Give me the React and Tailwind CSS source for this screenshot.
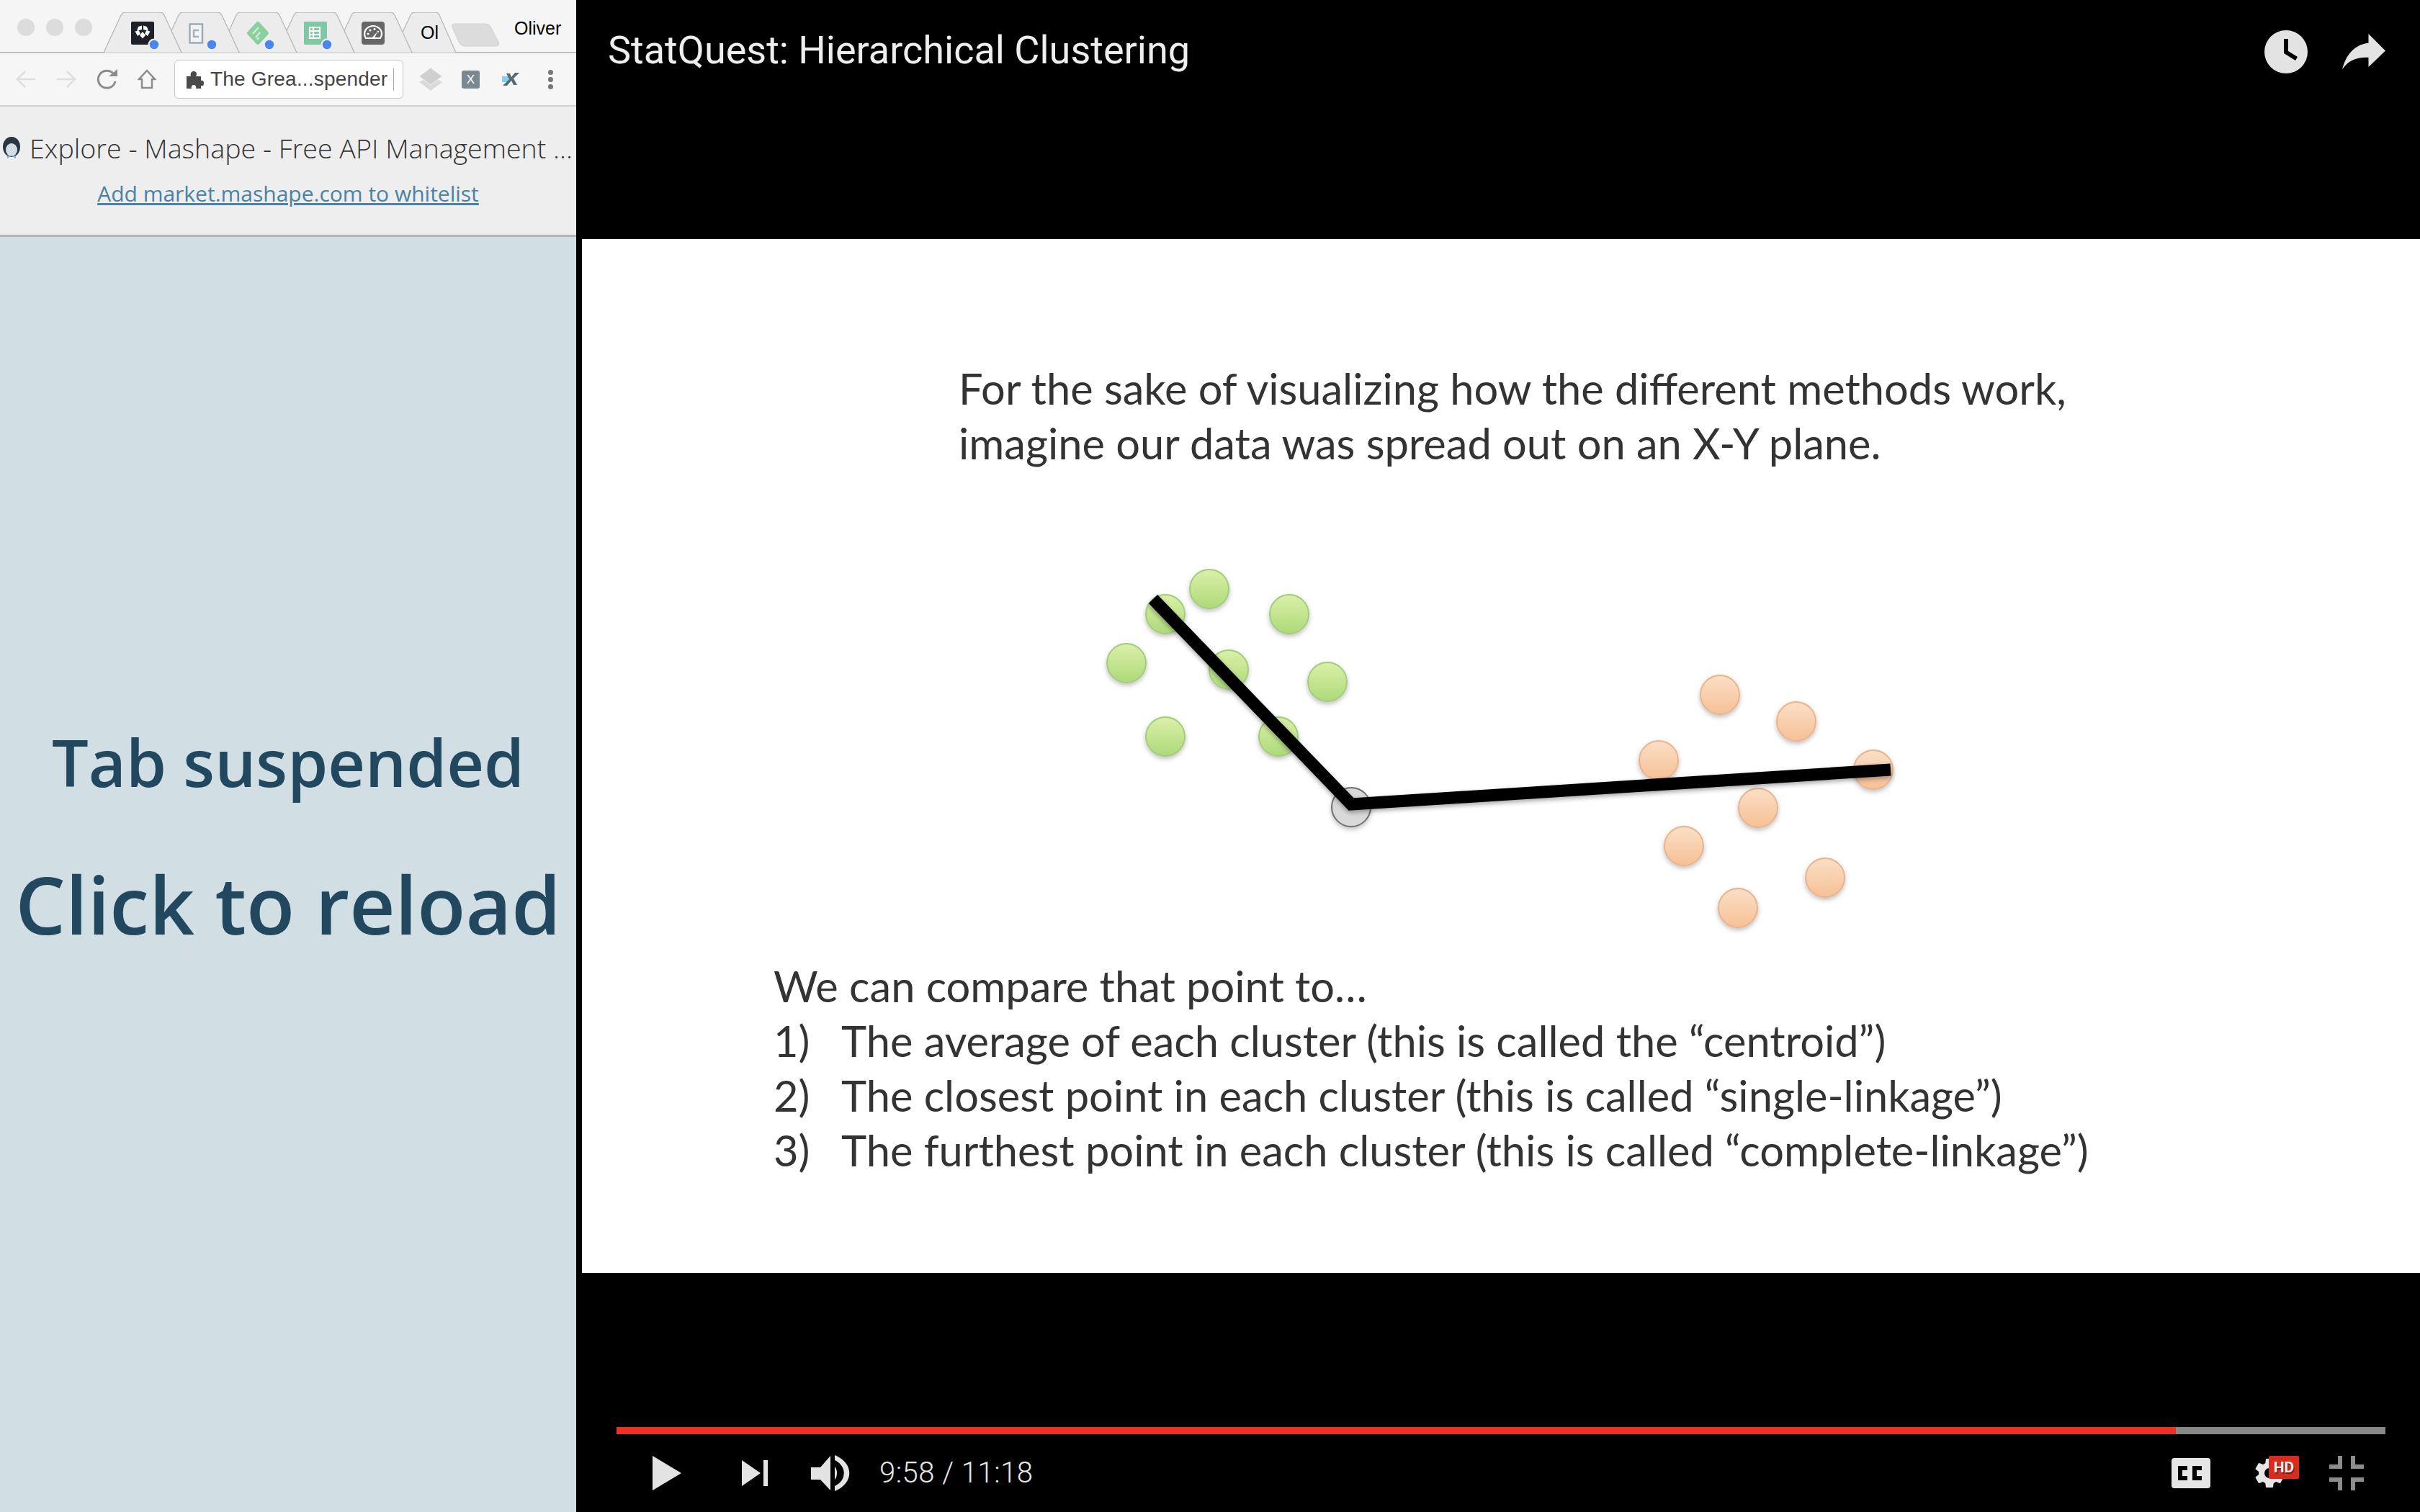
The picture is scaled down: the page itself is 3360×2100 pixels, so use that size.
import React from 'react';

// [bottom-left, top-left, top-right, bottom-right], first tab lies on top
const TAB_EDGES = [
  [4, 30, 86, 112],
  [84, 110, 166, 192],
  [164, 190, 246, 272],
  [244, 270, 326, 352],
  [324, 350, 406, 432],
  [406, 432, 468, 493],
];

const GREEN_DOTS = [[1618, 853], [1679, 818], [1790, 853], [1564, 921], [1706, 930], [1843, 947], [1618, 1023], [1775, 1023]];
const ORANGE_DOTS = [[2388, 965], [2494, 1002], [2303, 1056], [2601, 1069], [2441, 1122], [2338, 1175], [2534, 1219], [2413, 1261]];

const BlueDot = ({ cx }) => (
  <g>
    <circle cx={cx} cy="45" r="8.5" fill="#ececec" />
    <circle cx={cx} cy="45" r="6.2" fill="#4a86ee" />
  </g>
);

// tab strip drawn as one picture, the favicons sit on the tab shapes
function TabStrip() {
  return (
    <svg width="560" height="57" viewBox="0 0 560 57" className="mt-[17px] block shrink-0">
      {[...TAB_EDGES].reverse().map(([bl, tl, tr, br]) => (
        <path
          key={tl}
          d={`M${bl} 56 L${tl - 2} 4 Q${tl} 0 ${tl + 4} 0 L${tr - 4} 0 Q${tr} 0 ${tr + 2} 4 L${br} 56`}
          fill="#ececec"
          stroke="#b8b8b8"
          strokeWidth="1.3"
        />
      ))}
      <path d="M490 16 L534 16 Q539 16 541 20 L552 41 Q554 47 549 47 L505 47 Q500 47 498 43 L488 21 Q487 16 490 16 Z" fill="#dcdcdc" stroke="#d2d2d2" />

      <rect x="42" y="13" width="32" height="32" rx="2" fill="#1f2128" />
      <path d="M52 20 L57 18.5 L57 24 L50 26 Z M64 20 L59 18.5 L59 24 L66 26 Z M47.5 26.5 L53 25.5 L55 30 L51 33 Z M68.5 26.5 L63 25.5 L61 30 L65 33 Z M58 27 L62 32 L58 36.5 L54 32 Z" fill="#fff" />
      <BlueDot cx="74" />

      <rect x="123.5" y="16.5" width="17.5" height="26" fill="#f2f4f5" stroke="#9dabb4" strokeWidth="2.5" />
      <path d="M136 25 H129 V34 H136" fill="none" stroke="#a5b1b9" strokeWidth="2.5" />
      <BlueDot cx="154" />

      <path d="M216 14 Q218 12 220 14 L232 27 Q234 29 232 31 L220 44 Q218 46 216 44 L204 31 Q202 29 204 27 Z" fill="#8acf9e" />
      <path d="M219 21 L211 30 M221 28 L215 35 M219 35 L217 38" stroke="#cfeeda" strokeWidth="2.5" />
      <BlueDot cx="234" />

      <rect x="282" y="13" width="32" height="32" rx="1.5" fill="#7ec8a3" />
      <path d="M290 21 H304 V36 H290 Z M290 26 H304 M290 31 H304 M295 21 V36" stroke="#fff" strokeWidth="2.2" fill="none" />
      <BlueDot cx="314" />

      <rect x="362" y="13" width="32" height="32" rx="4" fill="#666" />
      <path d="M368 36 Q366 33 366 30 A12 11 0 0 1 390 30 Q390 33 388 36 Z" fill="#666" stroke="#fff" strokeWidth="2.2" />
      <path d="M376 36 L384 27 L380 36 Z" fill="#fff" />
      <circle cx="371" cy="30" r="1.6" fill="#fff" />
      <circle cx="374" cy="25" r="1.6" fill="#fff" />
      <circle cx="380" cy="23.5" r="1.6" fill="#fff" />
      <circle cx="385" cy="27" r="1.2" fill="#fff" />

      <clipPath id="ol-clip"><rect x="444" y="10" width="24" height="40" /></clipPath>
      <text x="444" y="37" fontSize="25" fill="#000" clipPath="url(#ol-clip)" fontFamily="'Liberation Sans', sans-serif">Ol</text>
    </svg>
  );
}

function BrowserToolbar() {
  return (
    <div className="flex h-[74px] items-center border-b-2 border-[#d2d2d2] bg-[#f6f6f6] pl-[22px]">
      <svg width="28" height="26" viewBox="0 0 28 26" className="shrink-0">
        <path d="M27 13 H3 M13 2 L2 13 L13 24" fill="none" stroke="#dedede" strokeWidth="2.5" />
      </svg>
      <svg width="28" height="26" viewBox="0 0 28 26" className="ml-[28px] shrink-0">
        <path d="M1 13 H25 M15 2 L26 13 L15 24" fill="none" stroke="#dedede" strokeWidth="2.5" />
      </svg>
      <svg width="30" height="28" viewBox="0 0 30 28" className="ml-[28px] shrink-0">
        <path d="M26 17 A12 12 0 1 1 23 6" fill="none" stroke="#8c8c8c" strokeWidth="3" />
        <path d="M17 10 H29 V0 Z" fill="#8c8c8c" />
      </svg>
      <svg width="26" height="28" viewBox="0 0 26 28" className="ml-[27px] shrink-0">
        <path d="M13 2 L24 14 H20 V26 H6 V14 H2 Z" fill="none" stroke="#8c8c8c" strokeWidth="2.5" />
      </svg>
      <div className="ml-[25px] flex h-[54px] w-[318px] shrink-0 items-center rounded-[6px] border border-[#c4c4c4] bg-white pl-[15px]">
        <svg width="25" height="25" viewBox="0 0 25 25" className="shrink-0">
          <path d="M1 8 H7 C6 5 7 1 11 1 C15 1 16 5 14 8 H21 V14 C24 13 25 15 25 18 C25 21 23 22 21 21 V25 H14 C15 22 13 20 11 20 C9 20 7 22 8 25 H1 Z" fill="#4a4a4a" />
        </svg>
        <span className="ml-[9px] font-['Liberation_Sans',sans-serif] text-[28px] leading-none tracking-[0.2px] whitespace-nowrap text-[#444]">The Grea...spender</span>
        <span className="ml-[8px] h-[31px] w-px bg-[#aaa]" />
      </div>
      <svg width="34" height="32" viewBox="0 0 34 32" className="ml-[21px] shrink-0">
        <path d="M17 11 L33 20 L17 32 L1 20 Z" fill="#dadada" />
        <path d="M17 0 L33 12 L17 24 L1 12 Z" fill="#cfcfcf" stroke="#f6f6f6" strokeWidth="1" />
      </svg>
      <div className="ml-[26px] flex h-[25px] w-[25px] shrink-0 items-center justify-center rounded-[3px] bg-[#7a888f] font-['Liberation_Sans',sans-serif] text-[17px] leading-none text-white">X</div>
      <svg width="25" height="18" viewBox="0 0 25 18" className="ml-[31px] shrink-0">
        <rect x="0" y="5" width="11" height="8" fill="#7fd0f2" />
        <path d="M6 1 H11 L13 6 L18 0 H24 L16 8 L21 17 H16 L13 11 L7 18 H1 L10 9 Z" fill="#5a6a72" />
      </svg>
      <div className="ml-[39px] flex shrink-0 flex-col gap-[3px]">
        <span className="h-[7px] w-[7px] rounded-full bg-[#777]" />
        <span className="h-[7px] w-[7px] rounded-full bg-[#777]" />
        <span className="h-[7px] w-[7px] rounded-full bg-[#777]" />
      </div>
    </div>
  );
}

function SuspendedPanel() {
  return (
    <div className="flex h-full w-[800px] shrink-0 flex-col">
      <div className="flex h-[74px] shrink-0 items-start border-b-2 border-[#c0c0c0] bg-[#f5f5f5]">
        <div className="mt-[26px] ml-[24px] flex shrink-0 gap-[16px]">
          <span className="h-[24px] w-[24px] rounded-full bg-[#dcdcdc]" />
          <span className="h-[24px] w-[24px] rounded-full bg-[#dcdcdc]" />
          <span className="h-[24px] w-[24px] rounded-full bg-[#dcdcdc]" />
        </div>
        <div className="ml-[12px] h-[73px] w-[560px] shrink-0 overflow-hidden"><TabStrip /></div>
        <span className="mt-[27px] ml-[14px] font-['Liberation_Sans',sans-serif] text-[25px] leading-none text-black">Oliver</span>
      </div>
      <BrowserToolbar />
      <div className="flex h-[181px] shrink-0 flex-col border-b-[3px] border-[#b4b4b4] bg-[#eeeeee]">
        <div className="mt-[30px] flex items-center pl-[3px] whitespace-nowrap">
          <svg width="26" height="32" viewBox="0 0 26 32" className="shrink-0">
            <ellipse cx="13" cy="14" rx="12" ry="14" fill="#263645" />
            <ellipse cx="13" cy="18" rx="8" ry="9" fill="#d5dce2" />
            <path d="M7 30 L13 27 L19 30 L19 26 L7 26 Z" fill="#7fb2cc" />
          </svg>
          <span className="ml-[12px] font-['Open_Sans',sans-serif] text-[37.6px] leading-[56px] font-light text-[#333]">Explore - Mashape - Free API Management ...</span>
        </div>
        <a className="mt-[13px] text-center font-['Open_Sans',sans-serif] text-[30px] leading-[44px] text-[#4a82a6] underline">Add market.mashape.com to whitelist</a>
      </div>
      <div className="flex flex-1 flex-col items-center bg-[#d1dfe5] font-['Open_Sans',sans-serif] font-semibold whitespace-nowrap text-[#22485f]">
        <h1 className="mt-[667px] text-[90px] leading-[124px]">Tab suspended</h1>
        <h2 className="mt-[60px] text-[110px] leading-[150px]">Click to reload</h2>
      </div>
    </div>
  );
}

function ClusterPlot() {
  return (
    <svg width="2552" height="510" viewBox="808 790 2552 510" className="block shrink-0">
      <defs>
        <linearGradient id="green-dot" x1="0" y1="0" x2="0" y2="1">
          <stop offset="0" stopColor="#daf0a8" />
          <stop offset="1" stopColor="#aed97a" />
        </linearGradient>
        <linearGradient id="orange-dot" x1="0" y1="0" x2="0" y2="1">
          <stop offset="0" stopColor="#fbdfc6" />
          <stop offset="1" stopColor="#f6c097" />
        </linearGradient>
        <filter id="dot-shadow" x="-30%" y="-30%" width="160%" height="170%">
          <feDropShadow dx="0" dy="3" stdDeviation="3" floodColor="#000" floodOpacity="0.25" />
        </filter>
        <filter id="line-blur" x="-5%" y="-20%" width="110%" height="140%">
          <feDropShadow dx="0" dy="3" stdDeviation="3" floodColor="#000" floodOpacity="0.35" />
        </filter>
      </defs>
      {GREEN_DOTS.map(([cx, cy]) => (
        <circle key={cx + '-' + cy} cx={cx} cy={cy} r="27" fill="url(#green-dot)" stroke="#a3cc7c" strokeWidth="2" filter="url(#dot-shadow)" />
      ))}
      {ORANGE_DOTS.map(([cx, cy]) => (
        <circle key={cx + '-' + cy} cx={cx} cy={cy} r="27" fill="url(#orange-dot)" stroke="#e9b48a" strokeWidth="2" filter="url(#dot-shadow)" />
      ))}
      <circle cx="1876" cy="1121" r="27" fill="#d9d9d9" stroke="#707070" strokeWidth="2" filter="url(#dot-shadow)" />
      <path d="M1601 832 L1876 1117 L2625 1069" fill="none" stroke="#000" strokeWidth="17" filter="url(#line-blur)" />
    </svg>
  );
}

function Slide() {
  return (
    <div className="ml-2 flex h-[1436px] flex-col bg-white font-['Lato',sans-serif] text-[59.6px] leading-[76px] whitespace-nowrap text-[#333]">
      <div className="mt-[169px] pl-[523px]">
        <p>For the sake of visualizing how the different methods work,</p>
        <p>imagine our data was spread out on an X-Y plane.</p>
      </div>
      <div className="mt-[137px]"><ClusterPlot /></div>
      <div className="mt-[31px] pl-[266px]">
        <p>We can compare that point to…</p>
        <div className="flex"><span className="w-[94px]">1)</span><span>The average of each cluster (this is called the “centroid”)</span></div>
        <div className="flex"><span className="w-[94px]">2)</span><span>The closest point in each cluster (this is called “single-linkage”)</span></div>
        <div className="flex"><span className="w-[94px]">3)</span><span>The furthest point in each cluster (this is called “complete-linkage”)</span></div>
      </div>
    </div>
  );
}

function Controls() {
  return (
    <div className="flex flex-1 flex-col justify-end pb-[28px]">
      <div className="mr-[48px] ml-[56px] flex h-[10px] bg-[#888]">
        <div className="h-full w-[2165px] bg-[#ee3124]" />
      </div>
      <div className="mt-[28px] flex h-[52px] items-center pr-[78px] pl-[106px]">
        <svg width="40" height="48" viewBox="0 0 40 48" className="shrink-0"><path d="M0 0 L40 24 L0 48 Z" fill="#e3e3e3" /></svg>
        <svg width="36" height="36" viewBox="0 0 36 36" className="ml-[84px] shrink-0"><path d="M0 0 L26 18 L0 36 Z M30 0 H36 V36 H30 Z" fill="#e3e3e3" /></svg>
        <svg width="56" height="52" viewBox="0 0 56 52" className="ml-[60px] shrink-0">
          <path d="M0 18 H13 L27 2 V50 L13 35 H0 Z" fill="#e3e3e3" />
          <path d="M33 17 C37 21 37 31 33 35 Z" fill="#e3e3e3" />
          <path d="M33 1 C60 12 60 40 33 51 V44 C50 36 50 16 33 8 Z" fill="#e3e3e3" />
        </svg>
        <span className="ml-[39px] font-['Roboto',sans-serif] text-[40px] leading-none font-light tracking-[0.5px] whitespace-nowrap text-[#e6e6e6]">9:58 / 11:18</span>
        <svg width="54" height="42" viewBox="0 0 54 42" className="ml-auto shrink-0">
          <rect width="54" height="42" rx="4" fill="#e6e6e6" />
          <path d="M22 14 H12 V28 H22 M42 14 H32 V28 H42" fill="none" stroke="#000" strokeWidth="6" />
        </svg>
        <div className="relative ml-[58px] h-[48px] w-[48px] shrink-0">
          <svg width="48" height="48" viewBox="0 0 24 24">
            <path d="M19.4 13c.04-.32.1-.66.1-1s-.06-.68-.1-1l2.1-1.65c.2-.15.25-.42.12-.64l-2-3.46c-.12-.22-.4-.3-.6-.22l-2.5 1c-.52-.4-1.08-.73-1.7-.98l-.37-2.65A.5.5 0 0 0 14 2h-4c-.25 0-.46.18-.5.42l-.37 2.65c-.6.25-1.17.59-1.7.98l-2.48-1c-.23-.09-.49 0-.61.22l-2 3.46c-.13.22-.07.49.12.64L4.57 11c-.04.32-.07.65-.07 1s.03.68.07 1l-2.1 1.65c-.2.15-.25.42-.13.64l2 3.46c.12.22.38.3.61.22l2.49-1c.52.4 1.08.73 1.69.98l.38 2.65c.03.24.24.42.5.42h4c.25 0 .46-.18.5-.42l.37-2.65c.6-.25 1.17-.59 1.7-.98l2.48 1c.23.09.49 0 .61-.22l2-3.46c.12-.22.07-.49-.12-.64L19.43 13zM12 15.5a3.5 3.5 0 1 1 0-7 3.5 3.5 0 0 1 0 7z" fill="#e6e6e6" />
          </svg>
          <span className="absolute top-0 -right-[17px] flex h-[32px] w-[42px] items-center justify-center rounded-[2px] bg-[#d62d20] font-['Roboto',sans-serif] text-[21px] leading-none font-bold text-[#eee] [text-shadow:1px_2px_0_#7a1410]">HD</span>
        </div>
        <svg width="48" height="48" viewBox="0 0 48 48" className="ml-[59px] shrink-0">
          <path d="M12 0 H18 V18 H0 V12 H12 Z M30 0 H36 V12 H48 V18 H30 Z M0 30 H18 V48 H12 V36 H0 Z M30 30 H48 V36 H36 V48 H30 Z" fill="#8c8c8c" />
        </svg>
      </div>
    </div>
  );
}

export default function App() {
  return (
    <div className="flex h-[2100px] w-[3360px] overflow-hidden bg-black">
      <SuspendedPanel />
      <div className="flex min-w-0 flex-1 flex-col">
        <div className="flex h-[332px] shrink-0 items-start">
          <h1 className="mt-[32px] ml-[44px] font-['Roboto',sans-serif] text-[54px] leading-[76px] font-normal whitespace-nowrap text-[#eeeeee]">StatQuest: Hierarchical Clustering</h1>
          <svg width="60" height="60" viewBox="0 0 60 60" className="mt-[42px] ml-auto shrink-0">
            <circle cx="30" cy="30" r="30" fill="#e3e3e3" />
            <path d="M27 12 H33 V29 L46 37 L43 42 L27 32 Z" fill="#000" />
          </svg>
          <svg width="60" height="50" viewBox="0 0 60 50" className="mt-[47px] mr-[48px] ml-[48px] shrink-0">
            <path d="M60 23.5 L36.5 0 V12.7 C16 15 5 30 0 49.5 C8 37 20 32 36.5 32.7 V46 Z" fill="#e3e3e3" />
          </svg>
        </div>
        <Slide />
        <Controls />
      </div>
    </div>
  );
}
